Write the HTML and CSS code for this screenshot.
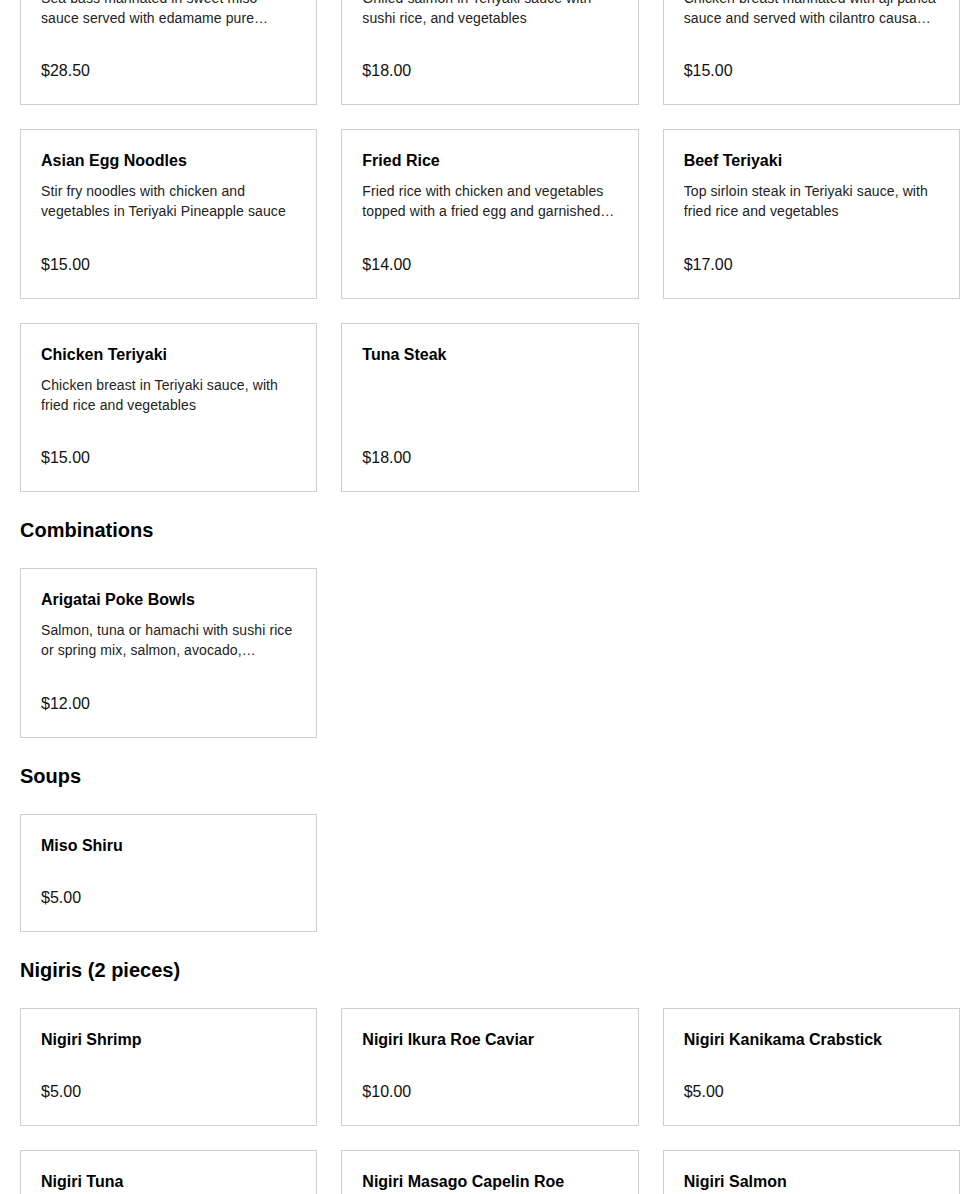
FILE: index.html
```html
<!DOCTYPE html>
<html lang="en">
<head>
<meta charset="utf-8">
<title>Menu</title>
<link rel="stylesheet" href="styles.css">
</head>
<body>
<main class="page">
  <section class="section">
    <div class="grid">
      <article class="card">
        <h3 class="card-title">Miso Sea Bass</h3>
        <p class="card-desc">Sea bass marinated in sweet miso sauce served with edamame pure accompanied by grilled asparagus</p>
        <p class="card-price">$28.50</p>
      </article>
      <article class="card">
        <h3 class="card-title">Salmon Teriyaki</h3>
        <p class="card-desc">Grilled salmon in Teriyaki sauce with sushi rice, and vegetables</p>
        <p class="card-price">$18.00</p>
      </article>
      <article class="card">
        <h3 class="card-title">Pollo Nikkei</h3>
        <p class="card-desc">Chicken breast marinated with aji panca sauce and served with cilantro causa and salsa criolla</p>
        <p class="card-price">$15.00</p>
      </article>
      <article class="card">
        <h3 class="card-title">Asian Egg Noodles</h3>
        <p class="card-desc">Stir fry noodles with chicken and vegetables in Teriyaki Pineapple sauce</p>
        <p class="card-price">$15.00</p>
      </article>
      <article class="card">
        <h3 class="card-title">Fried Rice</h3>
        <p class="card-desc">Fried rice with chicken and vegetables topped with a fried egg and garnished with green onions</p>
        <p class="card-price">$14.00</p>
      </article>
      <article class="card">
        <h3 class="card-title">Beef Teriyaki</h3>
        <p class="card-desc">Top sirloin steak in Teriyaki sauce, with fried rice and vegetables</p>
        <p class="card-price">$17.00</p>
      </article>
      <article class="card">
        <h3 class="card-title">Chicken Teriyaki</h3>
        <p class="card-desc">Chicken breast in Teriyaki sauce, with fried rice and vegetables</p>
        <p class="card-price">$15.00</p>
      </article>
      <article class="card">
        <h3 class="card-title">Tuna Steak</h3>
        <p class="card-price">$18.00</p>
      </article>
    </div>
  </section>

  <section class="section">
    <h2 class="section-title">Combinations</h2>
    <div class="grid">
      <article class="card">
        <h3 class="card-title">Arigatai Poke Bowls</h3>
        <p class="card-desc">Salmon, tuna or hamachi with sushi rice or spring mix, salmon, avocado, cucumber, edamame and seaweed salad</p>
        <p class="card-price">$12.00</p>
      </article>
    </div>
  </section>

  <section class="section">
    <h2 class="section-title">Soups</h2>
    <div class="grid">
      <article class="card">
        <h3 class="card-title">Miso Shiru</h3>
        <p class="card-price">$5.00</p>
      </article>
    </div>
  </section>

  <section class="section">
    <h2 class="section-title">Nigiris (2 pieces)</h2>
    <div class="grid">
      <article class="card">
        <h3 class="card-title">Nigiri Shrimp</h3>
        <p class="card-price">$5.00</p>
      </article>
      <article class="card">
        <h3 class="card-title">Nigiri Ikura Roe Caviar</h3>
        <p class="card-price">$10.00</p>
      </article>
      <article class="card">
        <h3 class="card-title">Nigiri Kanikama Crabstick</h3>
        <p class="card-price">$5.00</p>
      </article>
      <article class="card">
        <h3 class="card-title">Nigiri Tuna</h3>
        <p class="card-price">$5.00</p>
      </article>
      <article class="card">
        <h3 class="card-title">Nigiri Masago Capelin Roe</h3>
        <p class="card-price">$5.00</p>
      </article>
      <article class="card">
        <h3 class="card-title">Nigiri Salmon</h3>
        <p class="card-price">$5.00</p>
      </article>
    </div>
  </section>
</main>
</body>
</html>
```

FILE: styles.css
```css
* {
  box-sizing: border-box;
}

html, body {
  margin: 0;
  padding: 0;
  background: #ffffff;
}

body {
  font-family: "Liberation Sans", Arial, sans-serif;
  color: #000;
}

.page {
  width: 940px;
  margin: -64.5px 0 0 20px;
}

.section {
  display: flex;
  flex-direction: column;
}

.section + .section {
  margin-top: 24px;
}

.section-title {
  margin: 0 0 24px 0;
  font-size: 20px;
  line-height: 28px;
  font-weight: 700;
  color: #000;
}

.grid {
  display: grid;
  grid-template-columns: repeat(3, 1fr);
  gap: 24px;
}

.card {
  display: flex;
  flex-direction: column;
  border: 1px solid #cfcfcf;
  padding: 20px;
  background: #fff;
}

.card-title {
  margin: 0;
  font-size: 16px;
  line-height: 22px;
  font-weight: 700;
  color: #000;
}

.card-desc {
  margin: 9px 0 2.5px 0;
  font-size: 14px;
  line-height: 20px;
  letter-spacing: 0.1px;
  color: #222;
  display: -webkit-box;
  -webkit-line-clamp: 2;
  -webkit-box-orient: vertical;
  overflow: hidden;
}

.card-price {
  margin: auto 0 0 0;
  padding-top: 28px;
  font-size: 16px;
  line-height: 26px;
  color: #111;
}
```
